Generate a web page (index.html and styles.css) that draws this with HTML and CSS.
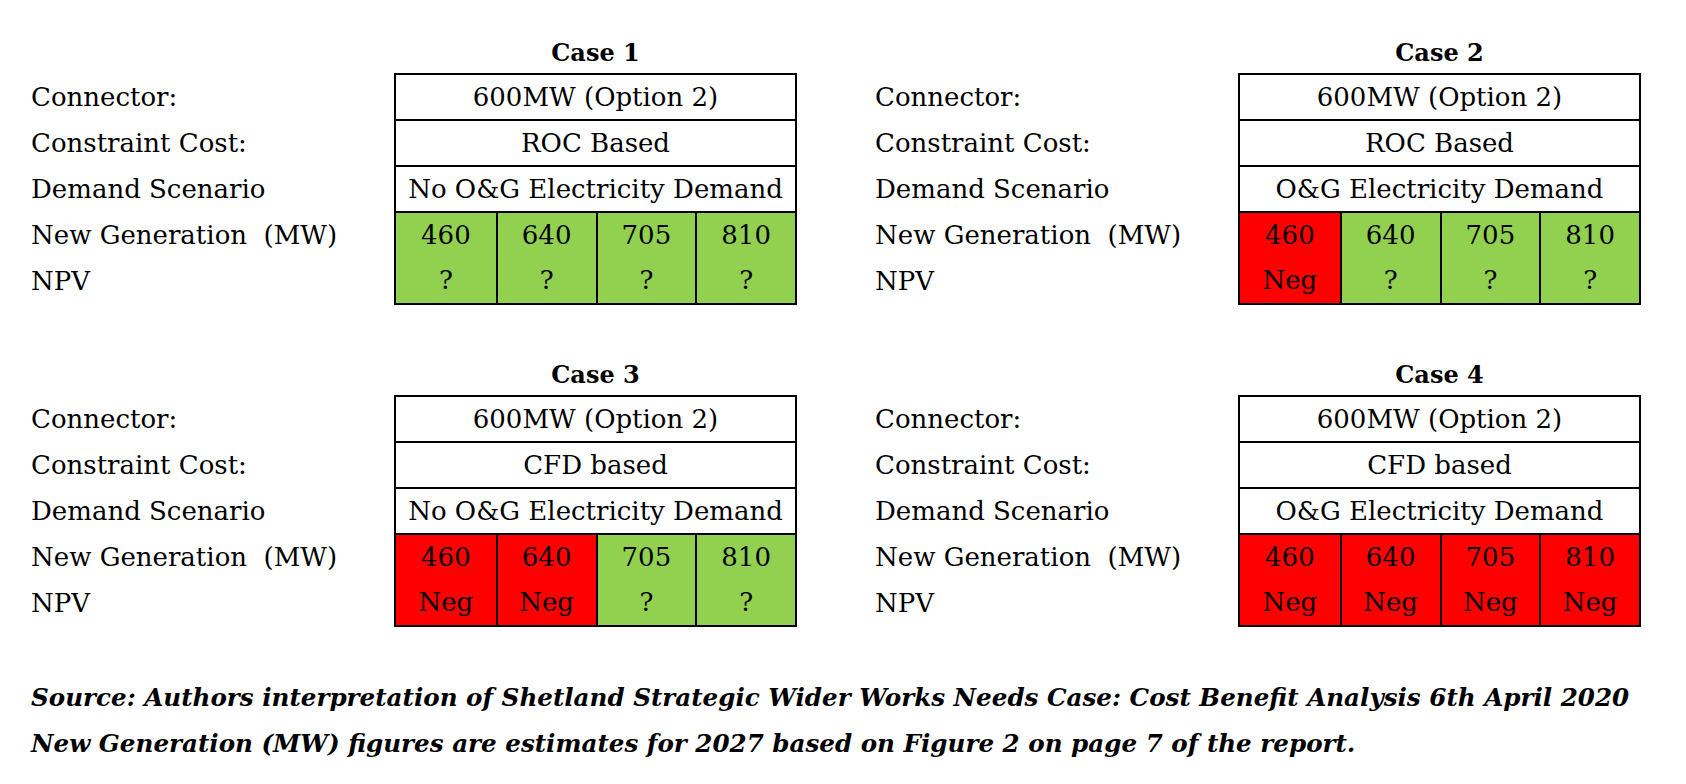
FILE: index.html
```html
<!DOCTYPE html>
<html>
<head>
<meta charset="utf-8">
<link rel="stylesheet" href="styles.css">
</head>
<body>
<div class="page">
  <div class="cases">
    <section class="case">
      <div class="spacer"></div>
      <div class="title">Case 1</div>
      <div class="labels">
        <div class="label">Connector:</div>
        <div class="label">Constraint Cost:</div>
        <div class="label">Demand Scenario</div>
        <div class="label">New Generation&nbsp; (MW)</div>
        <div class="label">NPV</div>
      </div>
      <div class="tbl">
        <div class="full">600MW (Option 2)</div>
        <div class="full">ROC Based</div>
        <div class="full">No O&amp;G Electricity Demand</div>
        <div class="cell green"><span>460</span><span>?</span></div>
        <div class="cell green"><span>640</span><span>?</span></div>
        <div class="cell green"><span>705</span><span>?</span></div>
        <div class="cell green"><span>810</span><span>?</span></div>
      </div>
    </section>
    <section class="case">
      <div class="spacer"></div>
      <div class="title">Case 2</div>
      <div class="labels">
        <div class="label">Connector:</div>
        <div class="label">Constraint Cost:</div>
        <div class="label">Demand Scenario</div>
        <div class="label">New Generation&nbsp; (MW)</div>
        <div class="label">NPV</div>
      </div>
      <div class="tbl">
        <div class="full">600MW (Option 2)</div>
        <div class="full">ROC Based</div>
        <div class="full">O&amp;G Electricity Demand</div>
        <div class="cell red"><span>460</span><span>Neg</span></div>
        <div class="cell green"><span>640</span><span>?</span></div>
        <div class="cell green"><span>705</span><span>?</span></div>
        <div class="cell green"><span>810</span><span>?</span></div>
      </div>
    </section>
    <section class="case">
      <div class="spacer"></div>
      <div class="title">Case 3</div>
      <div class="labels">
        <div class="label">Connector:</div>
        <div class="label">Constraint Cost:</div>
        <div class="label">Demand Scenario</div>
        <div class="label">New Generation&nbsp; (MW)</div>
        <div class="label">NPV</div>
      </div>
      <div class="tbl">
        <div class="full">600MW (Option 2)</div>
        <div class="full">CFD based</div>
        <div class="full">No O&amp;G Electricity Demand</div>
        <div class="cell red"><span>460</span><span>Neg</span></div>
        <div class="cell red"><span>640</span><span>Neg</span></div>
        <div class="cell green"><span>705</span><span>?</span></div>
        <div class="cell green"><span>810</span><span>?</span></div>
      </div>
    </section>
    <section class="case">
      <div class="spacer"></div>
      <div class="title">Case 4</div>
      <div class="labels">
        <div class="label">Connector:</div>
        <div class="label">Constraint Cost:</div>
        <div class="label">Demand Scenario</div>
        <div class="label">New Generation&nbsp; (MW)</div>
        <div class="label">NPV</div>
      </div>
      <div class="tbl">
        <div class="full">600MW (Option 2)</div>
        <div class="full">CFD based</div>
        <div class="full">O&amp;G Electricity Demand</div>
        <div class="cell red"><span>460</span><span>Neg</span></div>
        <div class="cell red"><span>640</span><span>Neg</span></div>
        <div class="cell red"><span>705</span><span>Neg</span></div>
        <div class="cell red"><span>810</span><span>Neg</span></div>
      </div>
    </section>
  </div>
  <div class="notes">
    <p>Source: Authors interpretation of Shetland Strategic Wider Works Needs Case: Cost Benefit Analysis 6th April 2020</p>
    <p>New Generation (MW) figures are estimates for 2027 based on Figure 2 on page 7 of the report.</p>
  </div>
</div>
</body>
</html>
```

FILE: styles.css
```css
html, body {
  margin: 0;
  padding: 0;
  background: #ffffff;
}

body {
  font-family: "DejaVu Serif", "Liberation Serif", serif;
  color: #000000;
}

.page {
  width: 1686px;
  height: 784px;
  padding: 33px 0 0 31px;
  box-sizing: border-box;
}

.cases {
  display: grid;
  grid-template-columns: 766px 766px;
  column-gap: 78px;
  row-gap: 50px;
}

.case {
  display: grid;
  grid-template-columns: 363px 403px;
  grid-template-rows: 40px auto;
}

.title {
  text-align: center;
  font-weight: bold;
  font-size: 24px;
  line-height: 40px;
}

.labels {
  display: flex;
  flex-direction: column;
  padding-top: 2px;
}

.label {
  height: 46px;
  line-height: 44px;
  font-size: 26px;
  white-space: nowrap;
}

.tbl {
  display: grid;
  grid-template-columns: repeat(4, 1fr);
  border: 2px solid #000;
  font-size: 26px;
}

.full {
  grid-column: 1 / -1;
  height: 44px;
  line-height: 44px;
  text-align: center;
  border-bottom: 2px solid #000;
  white-space: nowrap;
}

.cell {
  display: flex;
  flex-direction: column;
  align-items: center;
  border-left: 2px solid #000;
}

.cell:nth-child(4) {
  border-left: none;
}

.cell span {
  height: 45px;
  line-height: 44px;
}

.green {
  background: #92d050;
}

.red {
  background: #ff0000;
}

.notes {
  margin-top: 48px;
}

.notes p {
  margin: 0;
  font-weight: bold;
  font-style: italic;
  font-size: 24.6px;
  line-height: 46px;
  white-space: nowrap;
}
```
